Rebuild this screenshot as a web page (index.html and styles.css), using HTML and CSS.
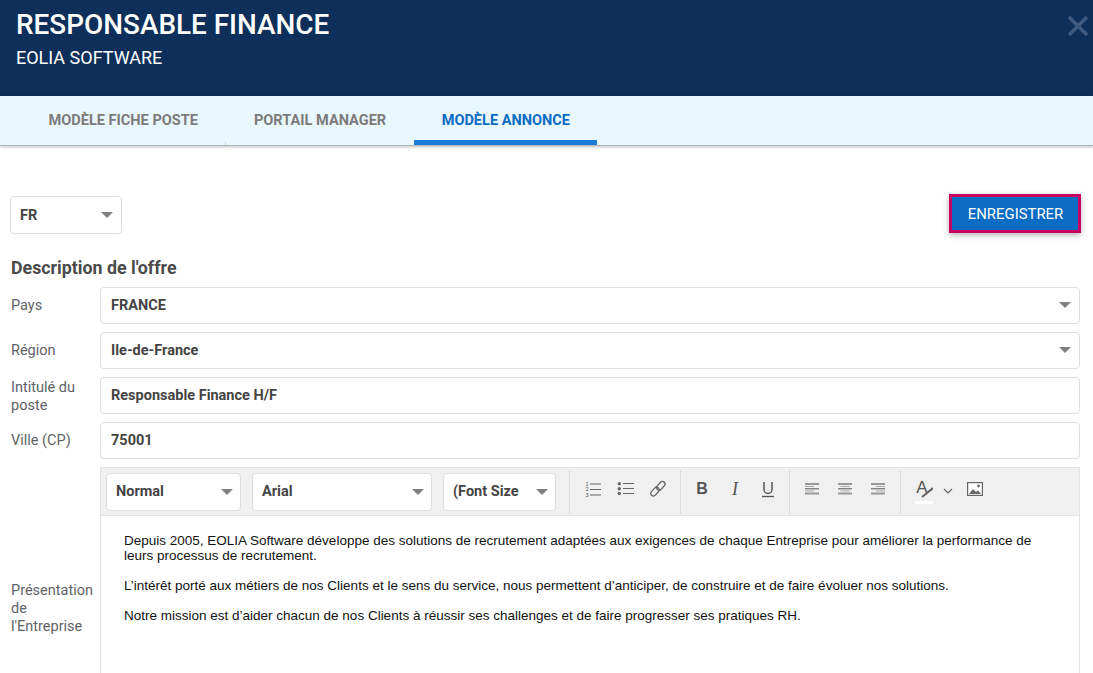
FILE: index.html
```html
<!DOCTYPE html>
<html lang="fr">
<head>
<meta charset="utf-8">
<title>Responsable Finance</title>
<link rel="stylesheet" href="styles.css">
</head>
<body>
<header class="top">
  <div>
    <h1 class="top-title">RESPONSABLE FINANCE</h1>
    <p class="top-sub">EOLIA SOFTWARE</p>
  </div>
  <svg class="close" width="22" height="22" viewBox="0 0 22 22"><path d="M2 2 20 20M20 2 2 20" stroke="#3f5a7e" stroke-width="3.6" fill="none"/></svg>
</header>
<nav class="tabs">
  <a class="tab tab-tick">MODÈLE FICHE POSTE</a>
  <a class="tab">PORTAIL MANAGER</a>
  <a class="tab tab-active">MODÈLE ANNONCE</a>
</nav>
<main class="main">
  <div class="actions">
    <div class="field lang"><span class="val">FR</span><i class="caret"></i></div>
    <button class="save">ENREGISTRER</button>
  </div>
  <h2 class="section">Description de l'offre</h2>
  <div class="row"><label class="lbl">Pays</label><div class="field grow"><span class="val">FRANCE</span><i class="caret"></i></div></div>
  <div class="row"><label class="lbl">Région</label><div class="field grow"><span class="val">Ile-de-France</span><i class="caret"></i></div></div>
  <div class="row"><label class="lbl lbl-two">Intitulé du poste</label><div class="field grow"><span class="val">Responsable Finance H/F</span></div></div>
  <div class="row"><label class="lbl">Ville (CP)</label><div class="field grow"><span class="val">75001</span></div></div>
  <div class="row row-editor">
    <label class="lbl lbl-three">Présentation de l'Entreprise</label>
    <div class="editor">
      <div class="toolbar">
        <div class="tgroup tgroup-sel">
          <div class="field tsel s1"><span class="val">Normal</span><i class="caret"></i></div>
          <div class="field tsel s2"><span class="val">Arial</span><i class="caret"></i></div>
          <div class="field tsel s3"><span class="val">(Font Size</span><i class="caret"></i></div>
        </div>
        <div class="tgroup g-list">
          <svg class="ic" width="18" height="18" viewBox="0 0 18 18"><path d="M5 4h11M5 9.5h11M5 15h11" stroke="#666" stroke-width="1.2"/><text x="0.5" y="5.8" class="mini">1</text><text x="0.5" y="11.3" class="mini">2</text><text x="0.5" y="16.8" class="mini">3</text></svg>
          <svg class="ic" width="18" height="18" viewBox="0 0 18 18"><path d="M6 3.5h11M6 8.5h11M6 13.5h11" stroke="#666" stroke-width="1.2"/><circle cx="2.3" cy="3.8" r="1.7" fill="#666"/><circle cx="2.3" cy="8.8" r="1.7" fill="#666"/><circle cx="2.3" cy="13.5" r="1.7" fill="#666"/></svg>
          <svg class="ic" width="18" height="18" viewBox="0 0 18 18"><g fill="none" stroke="#666" stroke-width="1.3"><rect x="9.2" y="0.8" width="5.2" height="10" rx="2.6" transform="rotate(42 11.8 5.8)"/><rect x="3.4" y="6.6" width="5.2" height="10" rx="2.6" transform="rotate(42 6 11.6)"/></g></svg>
        </div>
        <div class="tgroup g-fmt">
          <svg class="ic" width="14" height="18" viewBox="0 0 14 18"><text x="7" y="14" text-anchor="middle" class="gb">B</text></svg>
          <svg class="ic" width="14" height="18" viewBox="0 0 14 18"><text x="7" y="14.5" text-anchor="middle" class="gi">I</text></svg>
          <svg class="ic" width="14" height="18" viewBox="0 0 14 18"><path d="M3 2v7.5a4 4 0 0 0 8 0V2" fill="none" stroke="#555" stroke-width="1.5"/><path d="M1 16.5h12" stroke="#555" stroke-width="1.3"/></svg>
        </div>
        <div class="tgroup g-align">
          <svg class="ic" width="15" height="18" viewBox="0 0 15 18"><path d="M0 4h14M0 13.5h14" stroke="#999" stroke-width="2"/><path d="M0 6.5h9M0 11h9" stroke="#aaa"/><path d="M0 8.8h14" stroke="#555"/></svg>
          <svg class="ic" width="15" height="18" viewBox="0 0 15 18"><path d="M0 4h14M0 13.5h14" stroke="#999" stroke-width="2"/><path d="M2.5 6.5h9M2.5 11h9" stroke="#aaa"/><path d="M0 8.8h14" stroke="#555"/></svg>
          <svg class="ic" width="15" height="18" viewBox="0 0 15 18"><path d="M0 4h14M0 13.5h14" stroke="#999" stroke-width="2"/><path d="M5 6.5h9M5 11h9" stroke="#aaa"/><path d="M0 8.8h14" stroke="#555"/></svg>
        </div>
        <div class="tgroup g-extra">
          <svg class="ic" width="18" height="26" viewBox="0 0 18 26"><text x="7" y="15" text-anchor="middle" class="ga">A</text><path d="M7 19 18 10" stroke="#666" stroke-width="2.2"/><path d="M0 24.5h18" stroke="#fff" stroke-width="3"/></svg>
          <svg class="ic" width="10" height="6" viewBox="0 0 10 6"><path d="M1 1l4 4 4-4" fill="none" stroke="#666" stroke-width="1.2"/></svg>
          <svg class="ic pic" width="16" height="14" viewBox="0 0 16 14"><rect x="0.6" y="0.6" width="14.8" height="12.8" fill="#fff" stroke="#666" stroke-width="1.2"/><path d="M2 12l4-5 3 3 2-1.5 3 3.5z" fill="#666"/><circle cx="11.5" cy="4" r="1.4" fill="#666"/></svg>
        </div>
      </div>
      <div class="content">
        <p>Depuis 2005, EOLIA Software développe des solutions de recrutement adaptées aux exigences de chaque Entreprise pour améliorer la performance de leurs processus de recrutement.</p>
        <p>L’intérêt porté aux métiers de nos Clients et le sens du service, nous permettent d’anticiper, de construire et de faire évoluer nos solutions.</p>
        <p>Notre mission est d’aider chacun de nos Clients à réussir ses challenges et de faire progresser ses pratiques RH.</p>
      </div>
    </div>
  </div>
</main>
</body>
</html>
```
FILE: styles.css
```css
* { box-sizing: border-box; }
html, body { margin: 0; height: 100%; overflow: hidden; }
body { font-family: Roboto, "Liberation Sans", sans-serif; background: #fff; color: #444; font-size: 14px; }

.top { height: 96px; background: #0d2f59; color: #fff; padding: 8px 4px 0 16px; display: flex; justify-content: space-between; align-items: flex-start; }
.top-title { margin: 0; font-size: 27.9px; line-height: 34px; font-weight: 500; letter-spacing: 0; }
.top-sub { margin: 4px 0 0; font-size: 18px; line-height: 24px; }
.close { margin-top: 7px; }

.tabs { height: 50px; background: #e9f7ff; border-bottom: 1px solid #b5b5b5; box-shadow: 0 1px 3px rgba(0,0,0,.25); padding-left: 20.5px; display: flex; }
.tab { padding: 0 28px; line-height: 49px; height: 49px; font-weight: 700; font-size: 14.55px; color: #7b7b7b; position: relative; }
.tab-tick::after { content: ""; position: absolute; right: 0; bottom: 0; width: 1px; height: 3px; background: #d5d5d5; }
.tab-active { color: #0a6cc2; border-bottom: 5px solid #1f7bd8; padding: 0 26.5px 0 27.5px; }

.main { padding: 48px 13px 0 10px; }
.actions { display: flex; justify-content: space-between; align-items: flex-start; margin-bottom: 24.5px; }
.field { display: flex; align-items: center; justify-content: space-between; height: 37.5px; padding: 0 8px 0 10px; background: #fff; border: 1px solid #ddd; border-radius: 4px; }
.val { font-weight: 700; font-size: 14.5px; color: #444; white-space: nowrap; }
.caret { width: 0; height: 0; border-left: 6px solid transparent; border-right: 6px solid transparent; border-top: 6px solid #808080; flex: none; }
.lang { width: 112px; margin-top: 2px; }
.lang .val { margin-left: -1px; padding-top: 1px; }
.save { width: 132px; height: 39px; margin-right: -1px; margin-left: auto; background: #0a6cc2; color: #fff; border: 3px solid #c9005f; font: 400 14.9px Roboto, sans-serif; padding: 1px 0 0 1px; box-shadow: 0 2px 6px rgba(0,0,0,.3); }

.section { margin: 0 0 8.6px; padding-left: 1px; font-size: 17.8px; line-height: 20px; font-weight: 700; color: #4a4a4a; }
.row { display: flex; align-items: center; margin-bottom: 7.5px; }
.lbl { width: 90px; flex: none; font-size: 14.5px; line-height: 18px; color: #5f6368; padding: 1px 2px 0 1px; }
.lbl-two { padding-top: 0; margin: 1.5px 0 -1.5px; }
.lbl-three { padding-top: 3px; }
.grow { flex: 1; }
.row-editor { align-items: center; }
.editor { flex: 1; height: 282px; border: 1px solid #e3e3e3; border-top: 0; display: flex; flex-direction: column; }
.toolbar { height: 49px; flex: none; background: #f0f0f0; border-top: 1px solid #e3e3e3; border-bottom: 1px solid #e3e3e3; display: flex; align-items: flex-start; padding: 2px 0 0 5px; }
.tgroup { height: 44px; display: flex; align-items: center; border-right: 1px solid #dcdcdc; }
.tgroup-sel { gap: 11px; padding-right: 13px; }
.tsel { height: 38px; padding: 0 7px 0 9px; }
.s1 { width: 135px; }
.s2 { width: 180px; }
.s3 { width: 113px; }
.ic { flex: none; display: block; }
.mini { font: 5.5px "Liberation Sans", sans-serif; fill: #555; }
.gb { font: 700 16px "Liberation Sans", sans-serif; fill: #555; }
.gi { font: italic 400 18px "Liberation Serif", serif; fill: #555; }
.ga { font: 400 17px "Liberation Sans", sans-serif; fill: #555; }
.g-list { padding: 0 13px 6px 15px; gap: 14px; }
.g-fmt { padding: 0 14px 6px 14px; gap: 19px; }
.g-align { padding: 0 14px 6px 15px; gap: 18px; }
.g-extra { border-right: 0; padding: 0 0 2px 14px; gap: 10px; }
.pic { margin: 0 0 4px 4px; }
.content { padding: 17px 22px 0 23px; font-family: "Liberation Sans", Arial, sans-serif; font-size: 13.5px; line-height: 15px; color: #111; }
.content p { margin: 0 0 15px; }
```
